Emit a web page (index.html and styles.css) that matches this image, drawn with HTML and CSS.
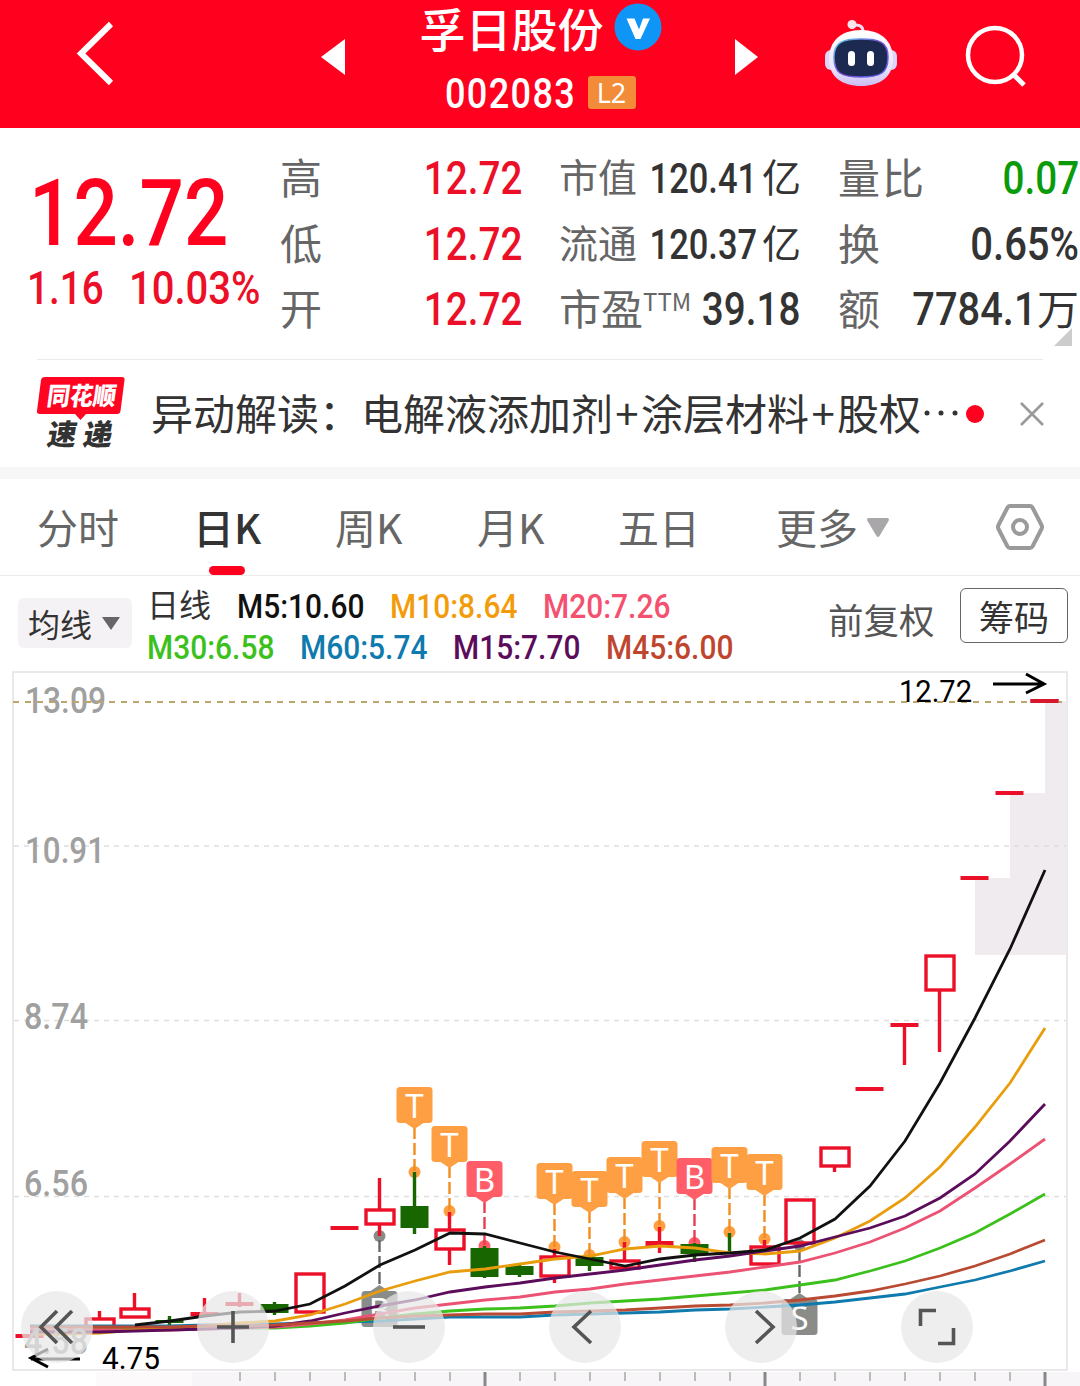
FILE: index.html
```html
<!DOCTYPE html>
<html lang="zh-CN">
<head>
    <meta charset="UTF-8">
    <meta name="viewport" content="width=device-width, initial-scale=1.0">
    <title>孚日股份 002083</title>
    <link rel="stylesheet" href="styles.css">
</head>
<body>

    <header class="header">
        <svg class="back" width="40" height="66" viewBox="0 0 40 66"><path d="M36 3L6 32.500L36 62" fill="none" stroke="#fff" stroke-width="6"/></svg>
        <svg class="prev" width="25" height="36" viewBox="0 0 25 36"><path d="M24 0V36L0 18Z" fill="#fff"/></svg>
        <div class="title">
            <div class="name">
                <span>孚日股份</span>
                <svg width="48" height="48" viewBox="0 0 48 48"><circle cx="24" cy="24" r="23.500" fill="#0f95f5"/><path d="M12.500 15.500H20.500L25 26.500L29 15.500H36L26.500 36H21.500Z" fill="#fff"/></svg>
            </div>
            <div class="code"><span class="num">002083</span><span class="level">L2</span></div>
        </div>
        <svg class="next" width="25" height="36" viewBox="0 0 25 36"><path d="M1 0V36L24 18Z" fill="#fff"/></svg>
        <svg class="robot" width="74" height="70" viewBox="0 0 74 70">
            <defs>
                <linearGradient id="shell" x1="0" y1="0" x2="0" y2="1"><stop offset="0" stop-color="#fff"/><stop offset=".7" stop-color="#ebe3fb"/><stop offset="1" stop-color="#c9bdf3"/></linearGradient>
                <linearGradient id="rim" x1="0" y1="0" x2="1" y2="1"><stop offset="0" stop-color="#58d5e8"/><stop offset=".5" stop-color="#7b48d8"/><stop offset="1" stop-color="#5b6cf0"/></linearGradient>
            </defs>
            <path d="M30 6Q39 5 39 13" fill="none" stroke="#f3dcf0" stroke-width="3"/>
            <circle cx="28" cy="5.500" r="4.500" fill="#fbe4ee"/>
            <rect x="1" y="31" width="12" height="20" rx="6" fill="#dcd6fb"/>
            <rect x="61" y="31" width="12" height="20" rx="6" fill="#dcd6fb"/>
            <path d="M37 11C57 11 69 22 69 40C69 58 56 67 37 67S5 58 5 40C5 22 17 11 37 11Z" fill="url(#shell)"/>
            <path d="M37 20C55 20 64 23 64 38C64 54 57 58 37 58S10 54 10 38C10 23 19 20 37 20Z" fill="#1c2a52" stroke="url(#rim)" stroke-width="1.500"/>
            <rect x="24" y="32" width="7" height="15" rx="3.500" fill="#fff"/>
            <rect x="43" y="32" width="7" height="15" rx="3.500" fill="#fff"/>
        </svg>
        <svg class="search" width="62" height="62" viewBox="0 0 62 62"><circle cx="30" cy="30" r="27" fill="none" stroke="#fff" stroke-width="4.500"/><path d="M48 49L59 60" stroke="#fff" stroke-width="5"/></svg>
    </header>

    <section class="quote">
        <div class="price">
            <div class="last"><span class="num">12.72</span></div>
            <div class="change"><span class="num diff">1.16</span><span class="num percent">10.03%</span></div>
        </div>
        <div class="col range">
            <div class="row"><span>高</span><b class="num red">12.72</b></div>
            <div class="row"><span>低</span><b class="num red">12.72</b></div>
            <div class="row"><span>开</span><b class="num red">12.72</b></div>
        </div>
        <div class="col cap">
            <div class="row small"><span>市值</span><b class="num">120.41</b><em>亿</em></div>
            <div class="row small"><span>流通</span><b class="num">120.37</b><em>亿</em></div>
            <div class="row ratio"><span>市盈<sup>TTM</sup></span><b class="num">39.18</b></div>
        </div>
        <div class="col volume">
            <div class="row"><span class="wide">量比</span><b class="num green">0.07</b></div>
            <div class="row"><span>换</span><b class="num percent">0.65%</b></div>
            <div class="row"><span>额</span><b class="num amount">7784.1</b><em>万</em></div>
            <i class="corner"></i>
        </div>
    </section>

    <section class="news">
        <svg class="logo" width="90" height="76" viewBox="0 0 90 76">
            <path d="M8 2H85Q88 2 87.500 5L83.500 36Q83 39 80 39H49L43.500 45L38 39H3Q-.500 39 0 36L4 5Q4.500 2 8 2Z" fill="#ff0522"/>
            <text class="logo-top" transform="translate(9 30) skewX(-8)" textLength="69" lengthAdjust="spacingAndGlyphs">同花顺</text>
            <text class="logo-bottom" transform="translate(9 70) skewX(-10)" textLength="29" lengthAdjust="spacingAndGlyphs">速</text>
            <text class="logo-bottom" transform="translate(45 70) skewX(-10)" textLength="29" lengthAdjust="spacingAndGlyphs">递</text>
        </svg>
        <div class="news-text">异动解读：电解液添加剂<i>+</i>涂层材料<i>+</i>股权<svg width="42" height="10" viewBox="0 0 42 10"><circle cx="6" cy="6" r="2.500"/><circle cx="20" cy="6" r="2.500"/><circle cx="34" cy="6" r="2.500"/></svg></div>
        <span class="dot"></span>
        <svg class="close" width="24" height="24" viewBox="0 0 24 24"><path d="M1 1L23 23M23 1L1 23" stroke="#999" stroke-width="2.600"/></svg>
    </section>

    <nav class="tabs">
        <span>分时</span>
        <span class="active">日K</span>
        <span>周K</span>
        <span>月K</span>
        <span>五日</span>
        <span class="more">更多<svg width="22" height="19" viewBox="0 0 22 19"><path d="M1 0H21Q22.500 1 21.500 3L12.500 18Q11 20 9.500 18L.500 3Q-.500 1 1 0Z" fill="#aaa7aa"/></svg></span>
        <svg class="gear" width="48" height="48" viewBox="0 0 48 48"><path d="M14 3H34Q35.500 3 36.500 4.500L45.500 22Q46.500 24 45.500 26L36.500 43.500Q35.500 45 34 45H14Q12.500 45 11.500 43.500L2.500 26Q1.500 24 2.500 22L11.500 4.500Q12.500 3 14 3Z" fill="none" stroke="#9a9a9a" stroke-width="4"/><circle cx="24" cy="24" r="7" fill="none" stroke="#9a9a9a" stroke-width="4"/></svg>
    </nav>

    <section class="ma">
        <div class="ma-select">均线<svg width="18" height="13" viewBox="0 0 18 13"><path d="M0 0H18L9 13Z" fill="#666"/></svg></div>
        <div class="ma-list">
            <div class="ma-line">
                <span class="period">日线</span>
                <span class="item m5"><b class="num">M5:10.60</b></span>
                <span class="item m10"><b class="num">M10:8.64</b></span>
                <span class="item m20"><b class="num">M20:7.26</b></span>
            </div>
            <div class="ma-line">
                <span class="item m30"><b class="num">M30:6.58</b></span>
                <span class="item m60"><b class="num">M60:5.74</b></span>
                <span class="item m15"><b class="num">M15:7.70</b></span>
                <span class="item m45"><b class="num">M45:6.00</b></span>
            </div>
        </div>
        <span class="adjust">前复权</span>
        <span class="chips">筹码</span>
    </section>

    <svg class="chart" id="chart" width="1080" height="726" viewBox="0 660 1080 726"></svg>

    <script>
        const RED = '#eb1028';
        const GREEN = '#176600';
        const out = [];
        const xAt = i => 30 + i * 35;

        // type, body top, body bottom, wick top, wick bottom (one entry per day)
        const candles = [
            ['dash', 1336, 1336, 1336, 1336],
            null,
            ['up', 1319, 1327, 1311, 1319],
            ['up', 1309, 1317, 1293, 1309],
            ['down', 1320, 1323, 1316, 1331],
            ['full', 1312, 1316, 1298, 1316],
            ['dash', 1304, 1304, 1293, 1307],
            ['down', 1304, 1313, 1302, 1315],
            ['up', 1274, 1312, 1274, 1274],
            ['dash', 1228, 1228, 1228, 1228],
            ['up', 1210, 1224, 1178, 1236],
            ['down', 1206, 1228, 1172, 1234],
            ['up', 1230, 1249, 1212, 1265],
            ['down', 1248, 1277, 1246, 1278],
            ['down', 1266, 1275, 1263, 1277],
            ['up', 1257, 1276, 1249, 1283],
            ['down', 1257, 1266, 1257, 1271],
            ['up', 1261, 1268, 1242, 1270],
            ['full', 1241, 1246, 1227, 1253],
            ['down', 1244, 1254, 1243, 1262],
            ['down', 1252, 1254, 1233, 1254],
            ['up', 1247, 1264, 1240, 1247],
            ['up', 1200, 1243, 1200, 1200],
            ['up', 1148, 1166, 1148, 1172],
            ['dash', 1089, 1089, 1089, 1089],
            ['dash', 1025, 1025, 1025, 1065],
            ['up', 956, 990, 956, 1052],
            ['dash', 878, 878, 878, 878],
            ['dash', 793, 793, 793, 793],
            ['dash', 701, 701, 701, 701]
        ];

        const averages = [
            ['#0e7aad', 0, [1326,1326,1326,1326,1326,1325,1325,1324,1323,1322,1321,1319,1317,1317,1317,1315,1314,1313,1312,1310,1309,1307,1305,1302,1298,1294,1287,1280,1271,1261]],
            ['#3cc11c', 0, [1330,1330,1330,1329,1329,1328,1328,1328,1326,1323,1318,1314,1311,1309,1308,1306,1303,1301,1299,1296,1293,1290,1285,1280,1271,1261,1248,1233,1214,1194]],
            ['#ec5273', 0, [1330,1330,1330,1330,1330,1329,1328,1327,1324,1320,1314,1308,1304,1300,1297,1292,1289,1284,1280,1276,1272,1267,1262,1253,1242,1228,1211,1188,1164,1139]],
            ['#e99d0c', 0, [1334,1334,1333,1330,1328,1326,1323,1321,1315,1304,1291,1281,1272,1269,1264,1259,1256,1249,1246,1248,1253,1254,1251,1238,1221,1198,1167,1127,1083,1028]],
            ['#5b0c5b', 0, [1332,1332,1332,1331,1330,1329,1328,1326,1321,1313,1306,1300,1292,1287,1283,1278,1274,1270,1265,1260,1256,1251,1246,1237,1228,1216,1198,1174,1141,1104]],
            ['#b94a33', 0, [1327,1327,1327,1327,1327,1326,1326,1325,1323,1321,1318,1316,1315,1314,1314,1312,1311,1310,1308,1306,1305,1303,1300,1296,1291,1284,1276,1266,1254,1240]],
            ['#111', 3, [1325,1321,1316,1312,1311,1304,1286,1265,1250,1233,1234,1243,1252,1259,1266,1259,1255,1253,1250,1238,1219,1186,1141,1083,1018,949,870]]
        ];

        // day index, letter, top of the tag, y of the dot
        const tags = [
            [11, 'T', 1087, 1172], [12, 'T', 1126, 1211], [13, 'B', 1161, 1246],
            [15, 'T', 1163, 1247], [16, 'T', 1171, 1255], [17, 'T', 1157, 1242],
            [18, 'T', 1141, 1226], [19, 'B', 1158, 1243], [20, 'T', 1147, 1232],
            [21, 'T', 1154, 1239], [10, 'B', 1291, 1236], [22, 'S', 1299, 1245]
        ];

        function line(x1, y1, x2, y2, color, width, extra = '') {
            out.push(`<line x1="${x1}" y1="${y1}" x2="${x2}" y2="${y2}" stroke="${color}" stroke-width="${width}" ${extra}/>`);
        }

        function rect(x, y, w, h, fill, extra = '') {
            out.push(`<rect x="${x}" y="${y}" width="${w}" height="${h}" fill="${fill}" ${extra}/>`);
        }

        function text(x, y, cls, length, value) {
            out.push(`<text x="${x}" y="${y}" class="${cls}" textLength="${length}" lengthAdjust="spacingAndGlyphs">${value}</text>`);
        }

        function drawFrame() {
            rect(192, 1372, 888, 14, '#f8f5f8');
            rect(96, 1372, 96, 14, '#fdfafc');
            rect(13, 672, 1054, 698, 'none', 'stroke="#e9e9e9" stroke-width="2"');
            out.push('<path d="M975 878H1010V793H1045V701H1067V955H975Z" fill="#efebef"/>');
            [846, 1020.5, 1196.5].forEach(y => line(14, y, 1066, y, '#dedede', 1.3, 'stroke-dasharray="5 5"'));
            for (let i = 6; i < 30; i++) {
                const major = (i - 13) % 8 === 0;
                line(xAt(i), 1372, xAt(i), major ? 1386 : 1381, major ? '#888' : '#bbb', major ? 3 : 2);
            }
        }

        function drawCandles() {
            candles.forEach((c, i) => {
                if (!c) return;
                const [type, top, bottom, high, low] = c;
                const x = xAt(i) - 0.5;
                const color = type === 'down' ? GREEN : RED;
                if (high < top) line(x, high, x, top, color, 3.4);
                if (low > bottom) line(x, bottom, x, low, color, 3.4);
                if (type === 'dash') rect(x - 14, top - 2, 28, 4, color);
                else if (type === 'up') rect(x - 13.5, top, 28, bottom - top, 'none', `stroke="${color}" stroke-width="3.4"`);
                else rect(x - 14, top, 28, bottom - top, color);
            });
        }

        function drawTags() {
            tags.forEach(([i, letter, top, dot]) => {
                const x = xAt(i) - 0.5;
                const below = top > dot;
                const color = below ? '#8a8c8a' : letter === 'T' ? '#ff9f43' : '#ff5e69';
                const stroke = below ? '#666' : letter === 'T' ? '#f28c1e' : '#e93c50';
                out.push(`<circle cx="${x}" cy="${dot}" r="6" fill="${color}"/>`);
                line(x, below ? dot + 4 : top + 40, x, below ? top - 4 : dot, stroke, 2.4, 'stroke-dasharray="12 4"');
                rect(x - 18, top, 36, 36, color, 'rx="3.5"');
                out.push(below
                    ? `<path d="M${x - 9} ${top}L${x} ${top - 6}L${x + 9} ${top}Z" fill="${color}"/>`
                    : `<path d="M${x - 9} ${top + 36}L${x} ${top + 42}L${x + 9} ${top + 36}Z" fill="${color}"/>`);
                out.push(`<text x="${x}" y="${top + 30.5}" class="tag">${letter}</text>`);
            });
        }

        function drawAverages() {
            averages.forEach(([color, start, values]) => {
                const points = values.map((y, i) => `${xAt(i + start)},${y}`).join(' ');
                out.push(`<polyline points="${points}" fill="none" stroke="${color}" stroke-width="2.8"/>`);
            });
        }

        function drawLabels() {
            text(25, 713, 'axis', 81, '13.09');
            text(25, 863, 'axis', 80, '10.91');
            text(24, 1029, 'axis', 64, '8.74');
            text(24, 1196, 'axis', 64, '6.56');
            text(24, 1354, 'axis', 64, '4.58');
            line(13, 702, 1062, 702, '#bda56c', 2, 'stroke-dasharray="6 6"');
            rect(1030.5, 699, 28, 4, '#d5182b');
            text(899, 702, 'extreme', 73, '12.72');
            text(102, 1369, 'extreme', 58, '4.75');
            out.push('<path d="M993 684H1044M1026 674L1044 684L1026 693" fill="none" stroke="#000" stroke-width="3"/>');
            out.push('<path d="M80 1359H31M48 1349L31 1358L48 1367" fill="none" stroke="#000" stroke-width="3"/>');
        }

        function drawButtons() {
            const icons = [
                'M57 1311L41 1327L57 1343M72 1311L56 1327L72 1343',
                'M217 1327H249M233 1311V1343',
                'M393 1327H425',
                'M591 1311L574 1327L591 1343',
                'M756 1311L773 1327L756 1343',
                'M920.500 1326V1310.500H936M938 1343.500H953.500V1328'
            ];
            icons.forEach((d, i) => {
                out.push(`<circle cx="${57 + i * 176}" cy="1327" r="36" fill="#e8e8e8" fill-opacity=".72"/>`);
                out.push(`<path d="${d}" fill="none" stroke="#555" stroke-width="3.6"/>`);
            });
        }

        drawFrame();
        drawTags();
        drawCandles();
        drawAverages();
        drawLabels();
        drawButtons();
        document.getElementById('chart').innerHTML = out.join('');
    </script>

</body>
</html>
```

FILE: styles.css
```css
* {
    box-sizing: border-box;
}
body {
    margin: 0;
    width: 1080px;
    height: 1386px;
    overflow: hidden;
    background-color: #fff;
    color: #333;
    font-family: "Noto Sans CJK SC", sans-serif;
}
svg {
    display: block;
    flex-shrink: 0;
}
em, i {
    font-style: normal;
}
.num {
    display: inline-block;
    font-family: Roboto, "Noto Sans CJK SC", sans-serif;
    font-weight: 500;
    white-space: nowrap;
    transform: scaleX(0.84);
    transform-origin: left center;
}
.num.percent {
    transform: scaleX(0.87);
}
.red {
    color: #eb1028;
}
.green {
    color: #0a9b0a;
}

/* top bar */
.header {
    display: flex;
    height: 128px;
    background-color: #ff001e;
    color: #fff;
}
.back {
    margin: 21px 0 0 75px;
}
.prev {
    margin: 39px 0 0 206px;
}
.title {
    width: 387px;
}
.name {
    display: flex;
    justify-content: center;
    align-items: center;
    gap: 10px;
    height: 54px;
    padding-left: 2px;
    font-size: 46px;
    font-weight: 500;
    line-height: 54px;
}
.name span {
    margin-top: -1px;
}
.code {
    display: flex;
    justify-content: center;
    align-items: center;
    gap: 8px;
    height: 50px;
    margin-top: 14px;
    font-size: 43px;
    line-height: 50px;
}
.code .num {
    width: 135px;
    margin-left: 1px;
    letter-spacing: 1.6px;
}
.level {
    width: 48px;
    height: 33px;
    margin-top: -1px;
    background-color: #f28c38;
    border-radius: 3px;
    font-family: "Noto Sans", sans-serif;
    font-size: 27px;
    font-weight: 400;
    line-height: 33px;
    text-align: center;
}
.next {
    margin: 39px 0 0 1px;
}
.robot {
    margin: 19px 0 0 65px;
}
.search {
    margin: 25px 0 0 67px;
}

/* price block */
.quote {
    display: flex;
    height: 232px;
    padding-top: 18px;
}
.price {
    width: 280px;
    padding-left: 27px;
    color: #ff001e;
}
.last {
    height: 106px;
    padding: 14px 0 0 2px;
    font-size: 93px;
    line-height: 90px;
}
.change {
    display: flex;
    padding-top: 11px;
    font-size: 46px;
    line-height: 50px;
    color: #eb1028;
}
.diff {
    width: 103px;
}
.col {
    position: relative;
}
.range {
    width: 242px;
}
.cap {
    width: 242px;
    margin-left: 37px;
}
.volume {
    width: 241px;
    margin-left: 37px;
}
.row {
    display: flex;
    align-items: center;
    height: 65.5px;
    font-size: 42px;
    line-height: 65px;
    white-space: nowrap;
}
.row span {
    margin-top: -6px;
    color: #666;
}
.row em {
    margin-top: -6px;
}
.row .wide {
    letter-spacing: 2px;
}
.row .num {
    margin-left: auto;
    font-size: 46px;
    transform-origin: right center;
}
.row.small {
    font-size: 39px;
}
.row.small .num {
    margin-left: -20px;
    margin-right: 5px;
    font-size: 42px;
    transform: scaleX(0.82);
}
.row.small span {
    margin-right: auto;
}
.ratio span {
    margin-right: auto;
}
.ratio .num {
    margin-left: -20px;
    margin-right: 1px;
}
.row .amount {
    transform: scaleX(0.865);
}
.row sup {
    font-size: 24px;
    line-height: 0;
    vertical-align: 14px;
}
.corner {
    position: absolute;
    right: 7px;
    bottom: 14px;
    border-left: 18px solid transparent;
    border-bottom: 18px solid #ccc;
}

/* news */
.news {
    display: flex;
    align-items: center;
    position: relative;
    height: 119px;
    border-bottom: 12px solid #f7f7f7;
    padding-left: 37px;
}
.news::before {
    content: "";
    position: absolute;
    left: 37px;
    right: 37px;
    top: -1px;
    height: 1px;
    background-color: #ebebeb;
}
.logo {
    margin-top: -2px;
    overflow: visible;
}
.logo-top {
    fill: #fff;
    font-size: 25px;
    font-weight: 900;
}
.logo-bottom {
    fill: #333;
    font-size: 29px;
    font-weight: 900;
}
.news-text {
    display: flex;
    align-items: center;
    width: 816px;
    margin: -3px 0 0 24px;
    font-size: 42px;
    line-height: 60px;
    white-space: nowrap;
}
.news-text i {
    width: 28px;
    text-align: center;
}
.news-text svg {
    fill: #333;
}
.dot {
    width: 18px;
    height: 18px;
    margin-left: -1px;
    background-color: #ff001e;
    border-radius: 50%;
}
.close {
    margin-left: 36px;
}

/* period tabs */
.tabs {
    display: grid;
    grid-template-columns: 158px 140px 142px 141px 158px 220px 48px;
    height: 97px;
    padding-left: 37px;
    border-bottom: 1px solid #ebebeb;
    color: #666;
    font-size: 41px;
    line-height: 94px;
}
.active {
    position: relative;
    left: -2px;
    color: #333;
    font-weight: 500;
}
.active::after {
    content: "";
    position: absolute;
    left: 16px;
    bottom: 0;
    width: 36px;
    height: 9px;
    background-color: #ff001e;
    border-radius: 5px;
}
.more {
    display: flex;
    align-items: flex-start;
}
.more svg {
    margin: 39px 0 0 9px;
}
.gear {
    align-self: center;
}

/* moving averages legend */
.ma {
    display: flex;
    height: 84px;
    padding-left: 18px;
}
.ma-select {
    display: flex;
    align-items: center;
    width: 114px;
    height: 50px;
    margin-top: 22px;
    padding-left: 10px;
    background-color: #f5f2f5;
    border-radius: 6px;
    font-size: 32px;
}
.ma-select svg {
    margin-left: 10px;
}
.ma-list {
    width: 696px;
    margin: 7px 0 0 15px;
}
.ma-line {
    display: flex;
    height: 41px;
    font-size: 34px;
    line-height: 41px;
}
.period {
    width: 90px;
    font-size: 32px;
}
.item {
    width: 153px;
}
.item .num {
    transform: scaleX(0.88);
}
.m5 { color: #111; }
.m10 { color: #f39c0b; }
.m20 { color: #f4506f; }
.m30 { color: #3cc11c; }
.m60 { color: #0e7aad; }
.m15 { color: #5b0c5b; }
.m45 { color: #c0452e; }
.adjust {
    width: 117px;
    margin-top: 17px;
    margin-left: -15px;
    font-size: 35.5px;
    line-height: 52px;
    color: #555;
}
.chips {
    width: 108px;
    height: 55px;
    margin-top: 12px;
    margin-left: 15px;
    border: 1px solid #666;
    border-radius: 6px;
    font-size: 35px;
    line-height: 54px;
    text-align: center;
}

/* candle chart */
.axis {
    fill: #a0a0a0;
    font-family: Roboto, sans-serif;
    font-size: 37px;
    font-weight: 500;
}
.extreme {
    fill: #000;
    font-family: Roboto, sans-serif;
    font-size: 32px;
}
.tag {
    fill: #fff;
    font-family: "Noto Sans", sans-serif;
    font-size: 33px;
    text-anchor: middle;
}
```
